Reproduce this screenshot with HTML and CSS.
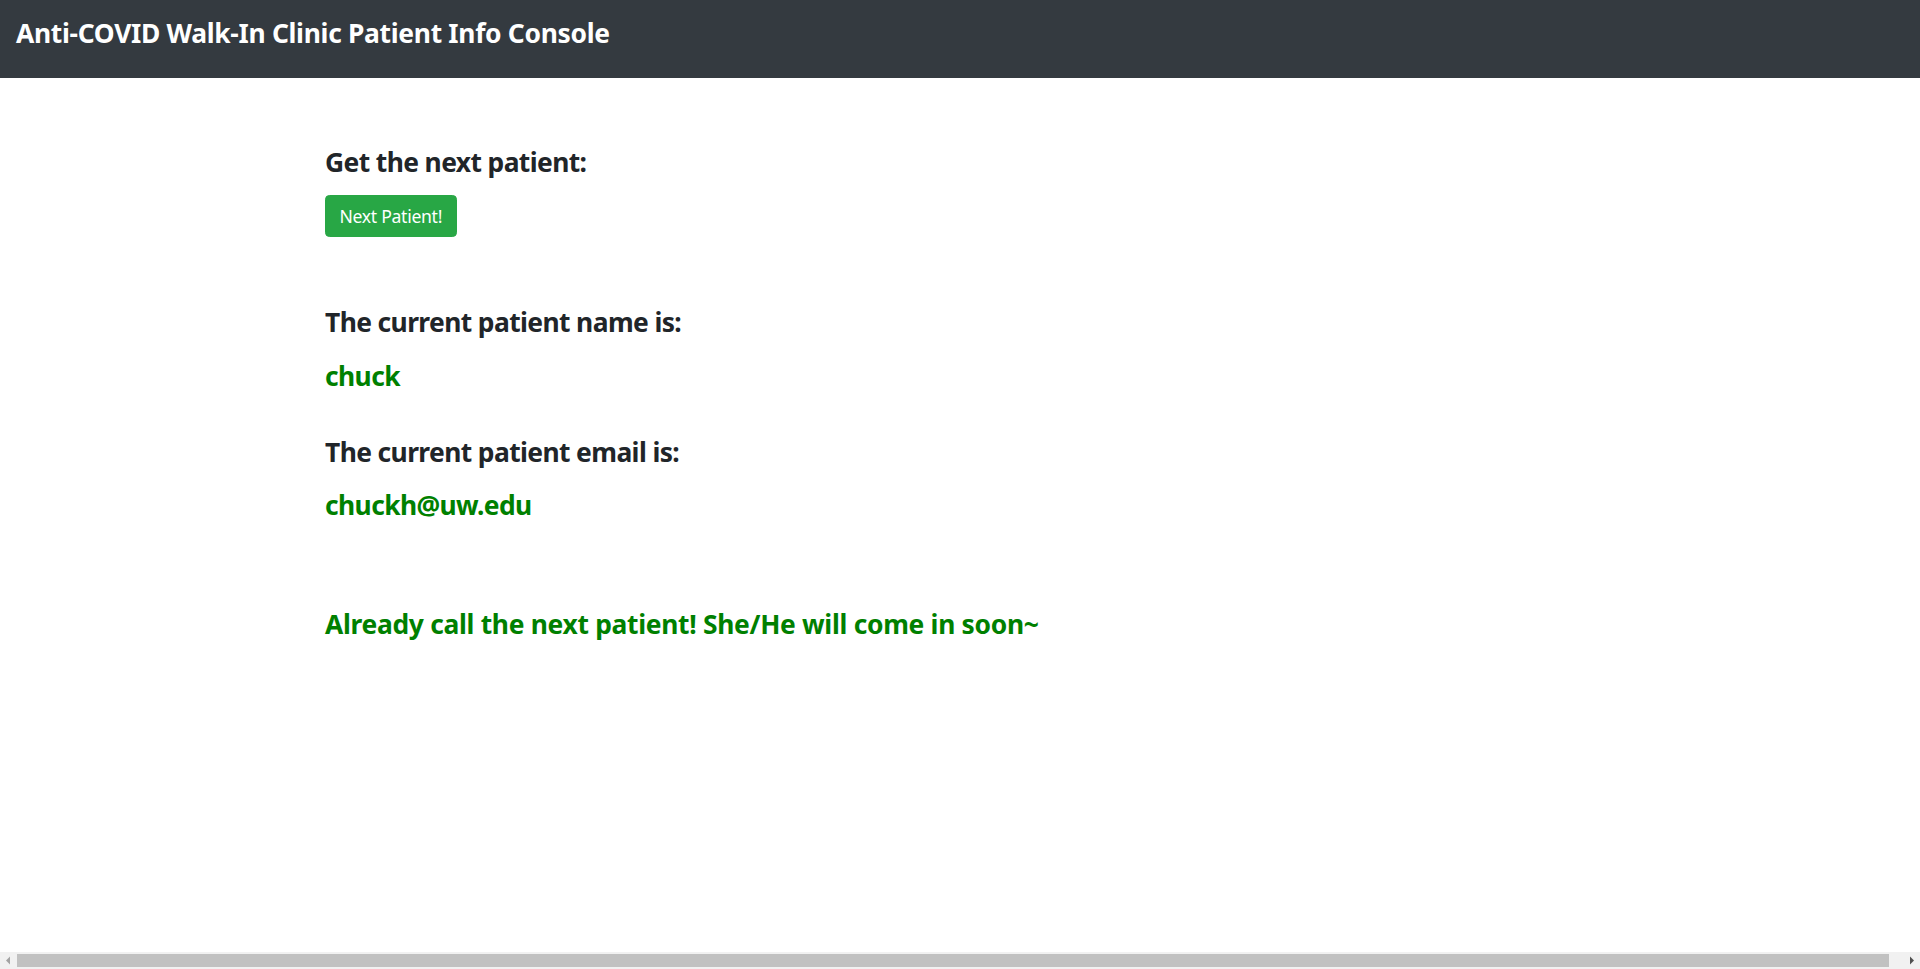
FILE: index.html
```html
<!DOCTYPE html>
<html lang="en">
<head>
<meta charset="utf-8">
<title>Anti-COVID Walk-In Clinic Patient Info Console</title>
<link rel="stylesheet" href="styles.css">
</head>
<body>
<div class="page">
  <header class="navbar">
    <h4 class="brand">Anti-COVID Walk-In Clinic Patient Info Console</h4>
  </header>
  <main class="content">
    <h4 class="label first">Get the next patient:</h4>
    <button class="btn-next" type="button">Next Patient!</button>
    <h4 class="label name-label">The current patient name is:</h4>
    <h4 class="value">chuck</h4>
    <h4 class="label email-label">The current patient email is:</h4>
    <h4 class="value">chuckh@uw.edu</h4>
    <h4 class="value notice">Already call the next patient! She/He will come in soon~</h4>
  </main>
  <div class="hscroll" aria-hidden="true">
    <div class="hscroll-btn">
      <svg width="17" height="17" viewBox="0 0 17 17"><path d="M6 8.5 L10 4.5 L10 12.5 Z" fill="#a3a3a3"/></svg>
    </div>
    <div class="hscroll-track"><div class="hscroll-thumb"></div></div>
    <div class="hscroll-btn">
      <svg width="17" height="17" viewBox="0 0 17 17"><path d="M11 8.5 L7 4.5 L7 12.5 Z" fill="#505050"/></svg>
    </div>
  </div>
</div>
</body>
</html>
```
FILE: styles.css
```css
html, body {
  margin: 0;
  padding: 0;
  background: #fff;
}
body {
  font-family: "Noto Sans", "Open Sans", sans-serif;
  color: #212529;
}
.page {
  display: flex;
  flex-direction: column;
  height: 100vh;
  overflow: hidden;
}
.navbar {
  background: #343a40;
  height: 78px;
  flex: none;
  box-sizing: border-box;
  padding: 16.5px 16px 0;
}
.brand {
  margin: 0;
  color: #fff;
  font-size: 26.4px;
  line-height: 32px;
  font-weight: 700;
  letter-spacing: -0.3px;
}
.content {
  flex: 1;
  display: flex;
  flex-direction: column;
  align-items: flex-start;
  padding-left: 325px;
}
.label, .value {
  margin: 0;
  font-size: 26.4px;
  line-height: 32px;
  font-weight: 700;
  letter-spacing: -0.6px;
}
.value { color: #008000; }
.notice { letter-spacing: -0.3px; }
.first { margin-top: 67.5px; }
.btn-next {
  margin-top: 17.5px;
  height: 42px;
  padding: 0 13.5px;
  background: #28a745;
  border: 1px solid #28a745;
  border-radius: 4.4px;
  color: #fff;
  font-family: inherit;
  font-size: 17.6px;
  font-weight: 400;
  letter-spacing: -0.3px;
}
.name-label { margin-top: 69px; }
.name-label + .value { margin-top: 22px; }
.email-label { margin-top: 44px; }
.email-label + .value { margin-top: 20.5px; }
.notice { margin-top: 87px; }

.hscroll {
  flex: none;
  height: 17px;
  display: flex;
  background: #f1f1f1;
}
.hscroll-btn {
  width: 17px;
  height: 17px;
  flex: none;
}
.hscroll-btn svg { display: block; }
.hscroll-track {
  flex: 1;
  display: flex;
  padding: 2px 14px 2px 0;
}
.hscroll-thumb {
  flex: 1;
  background: #c1c1c1;
}
```
